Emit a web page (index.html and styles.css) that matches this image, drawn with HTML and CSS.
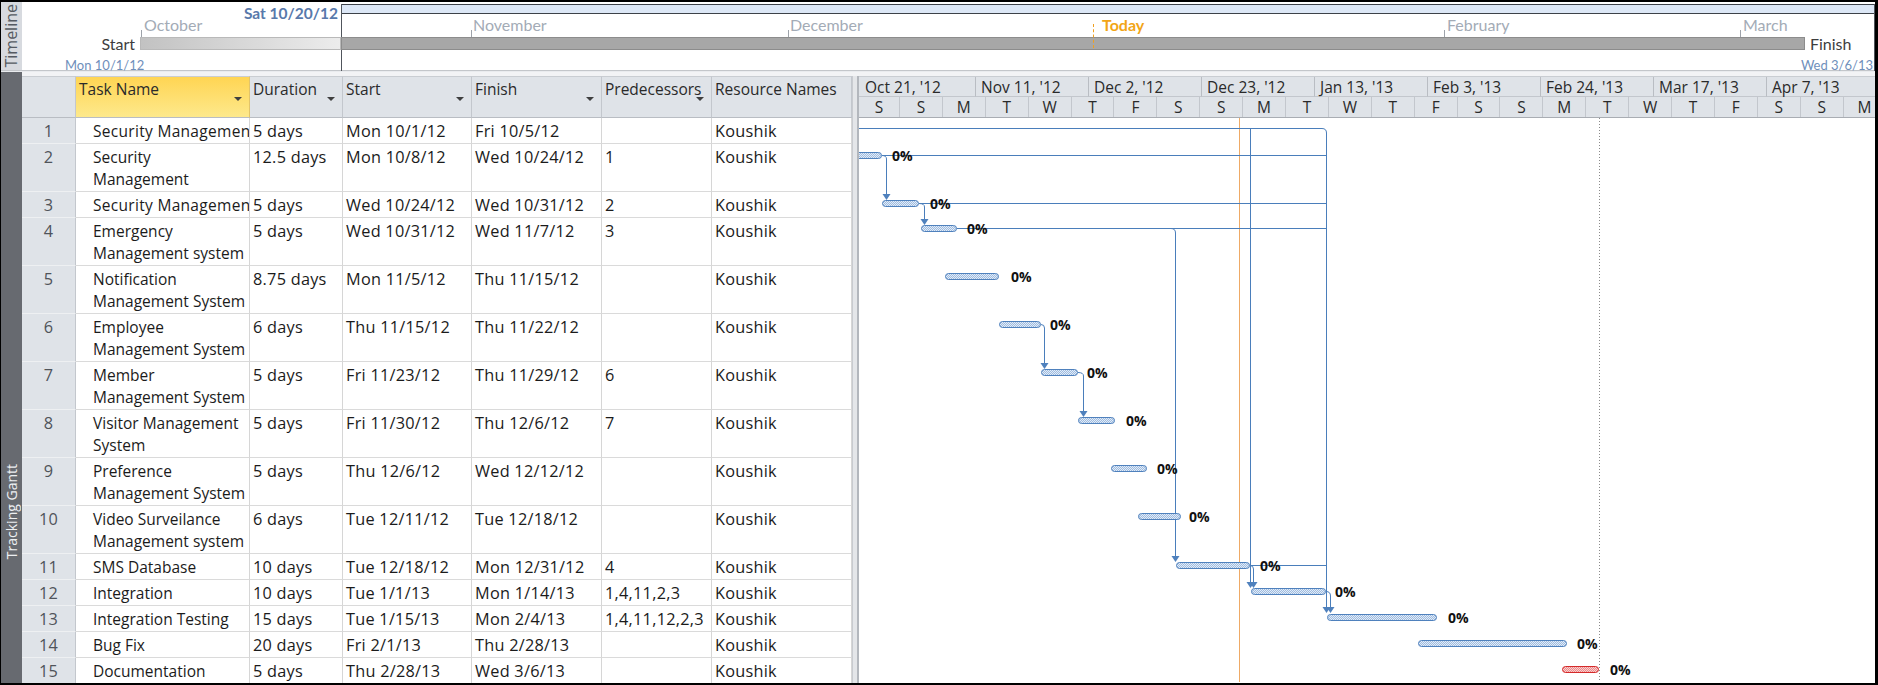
FILE: index.html
```html
<!DOCTYPE html>
<html lang="en">
<head>
<meta charset="utf-8">
<title>Tracking Gantt</title>
<link rel="stylesheet" href="styles.css">
</head>
<body>
<div class="frame">
  <section class="timeline">
    <div class="side side-light"><span>Timeline</span></div>
    <div class="tl-canvas">
      <div class="viewbox"><div class="band"></div></div>
      <div class="tl-sat">Sat 10/20/12</div>
      <div class="tick t-oct"></div><div class="month m-oct">October</div>
      <div class="tick t-nov"></div><div class="month m-nov">November</div>
      <div class="tick t-dec"></div><div class="month m-dec">December</div>
      <div class="tick t-feb"></div><div class="month m-feb">February</div>
      <div class="tick t-mar"></div><div class="month m-mar">March</div>
      <div class="today-tick"></div><div class="today">Today</div>
      <div class="tl-bar-past"></div>
      <div class="tl-bar"></div>
      <div class="tl-start">Start</div>
      <div class="tl-finish">Finish</div>
      <div class="tl-date d-start">Mon 10/1/12</div>
      <div class="tl-date d-end">Wed 3/6/13</div>
    </div>
  </section>
  <section class="main">
    <div class="side side-dark"><span>Tracking Gantt</span></div>
    <div class="work">
      <div class="topgap"></div>
      <div class="content">
        <table class="sheet">
          <colgroup>
            <col class="c-id"><col class="c-name"><col class="c-dur"><col class="c-start"><col class="c-fin"><col class="c-pred"><col class="c-res">
          </colgroup>
          <thead>
            <tr>
              <th class="id"></th>
              <th class="sel"><div class="hd"><span>Task Name</span><i class="dd"></i></div></th>
              <th><div class="hd"><span>Duration</span><i class="dd"></i></div></th>
              <th><div class="hd"><span>Start</span><i class="dd"></i></div></th>
              <th><div class="hd"><span>Finish</span><i class="dd"></i></div></th>
              <th><div class="hd"><span>Predecessors</span><i class="dd"></i></div></th>
              <th><div class="hd"><span>Resource Names</span></div></th>
            </tr>
          </thead>
          <tbody>
            <tr class="one"><td class="id">1</td><td class="name clip">Security Management</td><td>5 days</td><td>Mon 10/1/12</td><td>Fri 10/5/12</td><td></td><td>Koushik</td></tr>
            <tr class="two"><td class="id">2</td><td class="name">Security Management</td><td>12.5 days</td><td>Mon 10/8/12</td><td>Wed 10/24/12</td><td>1</td><td>Koushik</td></tr>
            <tr class="one"><td class="id">3</td><td class="name clip">Security Management</td><td>5 days</td><td>Wed 10/24/12</td><td>Wed 10/31/12</td><td>2</td><td>Koushik</td></tr>
            <tr class="two"><td class="id">4</td><td class="name">Emergency Management system</td><td>5 days</td><td>Wed 10/31/12</td><td>Wed 11/7/12</td><td>3</td><td>Koushik</td></tr>
            <tr class="two"><td class="id">5</td><td class="name">Notification Management System</td><td>8.75 days</td><td>Mon 11/5/12</td><td>Thu 11/15/12</td><td></td><td>Koushik</td></tr>
            <tr class="two"><td class="id">6</td><td class="name">Employee Management System</td><td>6 days</td><td>Thu 11/15/12</td><td>Thu 11/22/12</td><td></td><td>Koushik</td></tr>
            <tr class="two"><td class="id">7</td><td class="name">Member Management System</td><td>5 days</td><td>Fri 11/23/12</td><td>Thu 11/29/12</td><td>6</td><td>Koushik</td></tr>
            <tr class="two"><td class="id">8</td><td class="name">Visitor Management System</td><td>5 days</td><td>Fri 11/30/12</td><td>Thu 12/6/12</td><td>7</td><td>Koushik</td></tr>
            <tr class="two"><td class="id">9</td><td class="name">Preference Management System</td><td>5 days</td><td>Thu 12/6/12</td><td>Wed 12/12/12</td><td></td><td>Koushik</td></tr>
            <tr class="two"><td class="id">10</td><td class="name">Video Surveilance Management system</td><td>6 days</td><td>Tue 12/11/12</td><td>Tue 12/18/12</td><td></td><td>Koushik</td></tr>
            <tr class="one"><td class="id">11</td><td class="name">SMS Database</td><td>10 days</td><td>Tue 12/18/12</td><td>Mon 12/31/12</td><td>4</td><td>Koushik</td></tr>
            <tr class="one"><td class="id">12</td><td class="name">Integration</td><td>10 days</td><td>Tue 1/1/13</td><td>Mon 1/14/13</td><td>1,4,11,2,3</td><td>Koushik</td></tr>
            <tr class="one"><td class="id">13</td><td class="name">Integration Testing</td><td>15 days</td><td>Tue 1/15/13</td><td>Mon 2/4/13</td><td>1,4,11,12,2,3</td><td>Koushik</td></tr>
            <tr class="one"><td class="id">14</td><td class="name">Bug Fix</td><td>20 days</td><td>Fri 2/1/13</td><td>Thu 2/28/13</td><td></td><td>Koushik</td></tr>
            <tr class="one"><td class="id">15</td><td class="name">Documentation</td><td>5 days</td><td>Thu 2/28/13</td><td>Wed 3/6/13</td><td></td><td>Koushik</td></tr>
          </tbody>
        </table>
        <div class="splitter"></div>
        <div class="chart">
          <div class="tier tier-top">
            <div class="wk first">Oct 21, '12</div>
            <div class="wk">Nov 11, '12</div>
            <div class="wk">Dec 2, '12</div>
            <div class="wk">Dec 23, '12</div>
            <div class="wk">Jan 13, '13</div>
            <div class="wk">Feb 3, '13</div>
            <div class="wk">Feb 24, '13</div>
            <div class="wk">Mar 17, '13</div>
            <div class="wk">Apr 7, '13</div>
          </div>
          <div class="tier tier-bottom">
            <div>S</div><div>S</div><div>M</div><div>T</div><div>W</div><div>T</div><div>F</div><div>S</div>
            <div>S</div><div>M</div><div>T</div><div>W</div><div>T</div><div>F</div><div>S</div><div>S</div>
            <div>M</div><div>T</div><div>W</div><div>T</div><div>F</div><div>S</div><div>S</div><div>M</div>
          </div>
          <svg class="bars" width="1016" height="564" viewBox="0 0 1016 564" xmlns="http://www.w3.org/2000/svg">
            <defs>
              <pattern id="hatch" width="2" height="2" patternUnits="userSpaceOnUse">
                <rect width="2" height="2" fill="#e3ecf7"/>
                <rect width="1" height="1" fill="#9dbbe0"/>
                <rect x="1" y="1" width="1" height="1" fill="#9dbbe0"/>
              </pattern>
              <pattern id="hatchRed" width="2" height="2" patternUnits="userSpaceOnUse">
                <rect width="2" height="2" fill="#f8d0d0"/>
                <rect width="1" height="1" fill="#ee8a8a"/>
                <rect x="1" y="1" width="1" height="1" fill="#ee8a8a"/>
              </pattern>
            </defs>
            <g transform="translate(-859 -119)">
              <line x1="1239.5" y1="119" x2="1239.5" y2="685" stroke="#eeaa66" stroke-width="1"/>
              <line x1="1599.5" y1="119" x2="1599.5" y2="685" stroke="#8a8a8a" stroke-width="1" stroke-dasharray="1 2"/>
              <g fill="none" stroke="#4a7ebb" stroke-width="1">
                <path d="M859 129.5 H1322 Q1326.5 129.5 1326.5 134 V608"/>
                <path d="M1250.5 129.5 V583"/>
                <path d="M882 156.5 H1326"/>
                <path d="M882 156.5 Q886.5 156.5 886.5 160 V195"/>
                <path d="M919 204.5 H1326"/>
                <path d="M919 204.5 Q924.5 204.5 924.5 208 V220"/>
                <path d="M957 229.5 H1326"/>
                <path d="M957 229.5 H1171 Q1175.5 229.5 1175.5 234 V557"/>
                <path d="M1041 325.5 Q1044.5 325.5 1044.5 329 V364"/>
                <path d="M1078 373.5 Q1083.5 373.5 1083.5 377 V412"/>
                <path d="M1250 566.5 H1326"/>
                <path d="M1250 566.5 Q1253.5 566.5 1253.5 570 V583"/>
                <path d="M1326 592.5 Q1330.5 592.5 1330.5 597 V608"/>
              </g>
              <g fill="#4f81bd">
                <polygon points="1322.5,608 1330.5,608 1326.5,614"/>
                <polygon points="1246.5,583 1254.5,583 1250.5,589"/>
                <polygon points="882.5,195 890.5,195 886.5,201"/>
                <polygon points="920.5,220 928.5,220 924.5,226"/>
                <polygon points="1171.5,557 1179.5,557 1175.5,563"/>
                <polygon points="1040.5,364 1048.5,364 1044.5,370"/>
                <polygon points="1079.5,412 1087.5,412 1083.5,418"/>
                <polygon points="1249.5,583 1257.5,583 1253.5,589"/>
                <polygon points="1326.5,608 1334.5,608 1330.5,614"/>
              </g>
              <g fill="url(#hatch)" stroke="#4f81bd" stroke-width="1">
                <rect x="850.5" y="153.5" width="31" height="6" rx="3"/>
                <rect x="882.5" y="201.5" width="36" height="6" rx="3"/>
                <rect x="921.5" y="226.5" width="35" height="6" rx="3"/>
                <rect x="945.5" y="274.5" width="53" height="6" rx="3"/>
                <rect x="999.5" y="322.5" width="41" height="6" rx="3"/>
                <rect x="1041.5" y="370.5" width="36" height="6" rx="3"/>
                <rect x="1078.5" y="418.5" width="36" height="6" rx="3"/>
                <rect x="1111.5" y="466.5" width="35" height="6" rx="3"/>
                <rect x="1138.5" y="514.5" width="42" height="6" rx="3"/>
                <rect x="1176.5" y="563.5" width="73" height="6" rx="3"/>
                <rect x="1251.5" y="589.5" width="74" height="6" rx="3"/>
                <rect x="1327.5" y="615.5" width="109" height="6" rx="3"/>
                <rect x="1418.5" y="641.5" width="148" height="6" rx="3"/>
              </g>
              <rect x="1562.5" y="667.5" width="36" height="6" rx="3" fill="url(#hatchRed)" stroke="#d42a2a" stroke-width="1"/>
              <g class="pct">
                <text x="892" y="156">0%</text>
                <text x="930" y="204">0%</text>
                <text x="967" y="229">0%</text>
                <text x="1011" y="277">0%</text>
                <text x="1050" y="325">0%</text>
                <text x="1087" y="373">0%</text>
                <text x="1126" y="421">0%</text>
                <text x="1157" y="469">0%</text>
                <text x="1189" y="517">0%</text>
                <text x="1260" y="566">0%</text>
                <text x="1335" y="592">0%</text>
                <text x="1448" y="618">0%</text>
                <text x="1577" y="644">0%</text>
                <text x="1610" y="670">0%</text>
              </g>
            </g>
          </svg>
        </div>
      </div>
    </div>
  </section>
</div>
</body>
</html>
```

FILE: styles.css
```css
* { box-sizing: border-box; margin: 0; padding: 0; }
html, body { width: 1878px; height: 685px; overflow: hidden; }
body { background: #000; font-family: "Open Sans", "Noto Sans", sans-serif; color: #1b1b1b; }

.frame {
  margin: 2px 3px 2px 1px;
  width: 1874px;
  height: 681px;
  background: #fff;
  display: flex;
  flex-direction: column;
  overflow: hidden;
}

/* ---------- side labels ---------- */
.side {
  width: 21px;
  flex: 0 0 21px;
  display: flex;
  align-items: center;
}
.side span {
  writing-mode: vertical-rl;
  transform: rotate(180deg);
  white-space: nowrap;
  line-height: 21px;
}
.side-light { background: #d7dadf; justify-content: center; }
.side-light span { color: #555a61; font-size: 16px; }
.side-dark {
  background: #676a70;
  flex-direction: column;
  justify-content: flex-end;
  padding-bottom: 124px;
}
.side-dark span { color: #eceef1; font-size: 14px; }

/* ---------- timeline ---------- */
.timeline {
  height: 69px;
  flex: 0 0 69px;
  display: flex;
  border-bottom: 1px solid #c3c6ca;
}
.tl-canvas {
  position: relative;
  flex: 1;
  font-family: Lato, "Open Sans", sans-serif;
}
.viewbox {
  position: absolute;
  left: 319px; top: 2px; right: 0; bottom: -1px;
  border-left: 1px solid #50555c;
  border-right: 1px solid #50555c;
}
.band {
  height: 10px;
  background: #dce7f6;
  border-top: 1px solid #3c4148;
  border-bottom: 1px solid #3c4148;
}
.tl-sat {
  position: absolute;
  left: 180px; width: 136px; top: 1px;
  text-align: right;
  font-size: 15.5px; line-height: 20px; font-weight: 700;
  color: #5879ab;
}
.tick {
  position: absolute;
  top: 28px; width: 1px; height: 8px;
  background: #9ea3aa;
}
.month {
  position: absolute;
  top: 13px;
  font-size: 16px; line-height: 20px;
  color: #a3abb6;
}
.t-oct { left: 119px; } .m-oct { left: 122px; }
.t-nov { left: 449px; } .m-nov { left: 451px; }
.t-dec { left: 766px; } .m-dec { left: 768px; }
.t-feb { left: 1422px; } .m-feb { left: 1425px; }
.t-mar { left: 1718px; } .m-mar { left: 1721px; }
.today {
  position: absolute;
  left: 1080px; top: 13px;
  font-size: 16px; line-height: 20px; font-weight: 700;
  color: #f2a516;
}
.today-tick {
  position: absolute;
  left: 1071px; top: 22px; height: 24px; width: 0;
  border-left: 1px dashed #f0a020;
  z-index: 2;
}
.tl-bar-past {
  position: absolute;
  left: 118px; width: 201px; top: 35px; height: 13px;
  background: linear-gradient(to right, #c2c2c2, #ececec);
  border: 1px solid #b9b9b9;
}
.tl-bar {
  position: absolute;
  left: 319px; width: 1464px; top: 35px; height: 13px;
  background: #a7a7a7;
  border: 1px solid #8c8c8c;
}
.tl-start {
  position: absolute;
  left: 40px; width: 73px; top: 32px;
  text-align: right;
  font-size: 16px; line-height: 20px; color: #3d3d3d;
}
.tl-finish {
  position: absolute;
  left: 1788px; top: 32px;
  font-size: 16px; line-height: 20px; color: #3d3d3d;
}
.tl-date {
  position: absolute;
  top: 55px;
  font-size: 13px; line-height: 16px; color: #6f8fbb;
}
.d-start { left: 43px; }
.d-end { left: 1766px; width: 85px; text-align: right; }

/* ---------- main ---------- */
.main {
  flex: 1;
  display: flex;
  min-height: 0;
  border-top: 1px solid #e9ebee;
}
.work {
  flex: 1;
  display: flex;
  flex-direction: column;
  min-width: 0;
}
.topgap {
  height: 4px;
  flex: 0 0 4px;
  background: #f2f3f5;
}
.content {
  flex: 1;
  display: flex;
  min-height: 0;
  overflow: hidden;
  align-items: flex-start;
}

/* ---------- sheet ---------- */
.sheet {
  width: 830px;
  flex: 0 0 830px;
  table-layout: fixed;
  border-collapse: separate;
  border-spacing: 0;
  font-size: 15.5px;
}
.c-id { width: 54px; }
.c-name { width: 174px; }
.c-dur { width: 93px; }
.c-start { width: 129px; }
.c-fin { width: 130px; }
.c-pred { width: 110px; }
.c-res { width: 140px; }

.sheet th {
  height: 42px;
  background: #dfe3e8;
  border-right: 1px solid #c3c7cd;
  border-bottom: 1px solid #b9bdc3;
  border-top: 1px solid #c9cdd2;
  font-weight: 400;
  text-align: left;
  vertical-align: top;
  padding: 1px 7px 0 3px;
  color: #2a2a2a;
  white-space: nowrap;
}
.sheet th.sel {
  background: linear-gradient(to bottom, #ffd553, #fde98c);
  border-right-color: #e2c46a;
}
.hd {
  display: flex;
  align-items: flex-start;
  line-height: 22px;
}
.hd span { flex: 1 1 auto; min-width: 0; white-space: nowrap; }
.dd {
  flex: 0 0 8px;
  margin-top: 19px;
  width: 0; height: 0;
  border-left: 4px solid transparent;
  border-right: 4px solid transparent;
  border-top: 4px solid #3f3f3f;
}
.sheet td {
  vertical-align: top;
  padding: 2px 3px 0 3px;
  line-height: 22px;
  font-size: 16.3px;
  letter-spacing: 0.25px;
  border-right: 1px solid #d6d6d6;
  border-bottom: 1px solid #dadada;
  overflow: hidden;
  white-space: nowrap;
}
.sheet .one td { height: 26px; }
.sheet .two td { height: 48px; }
.sheet td.name {
  padding-left: 17px; padding-right: 0;
  white-space: normal;
  font-size: 15.5px;
  letter-spacing: 0;
}
.sheet td.name.clip { white-space: nowrap; letter-spacing: 0.3px; }
.sheet .id {
  background: #dfe3e8;
  text-align: center;
  color: #50545a;
  border-right: 1px solid #c3c7cd;
  border-bottom-color: #eef0f2;
  padding-left: 0; padding-right: 0;
}
.sheet th.id { border-bottom-color: #b9bdc3; }

/* ---------- splitter ---------- */
.splitter {
  flex: 0 0 7px;
  align-self: stretch;
  background: #e4e6e9;
  border-left: 1px solid #c8cbd0;
  border-right: 2px solid #b3b7bd;
}

/* ---------- chart ---------- */
.chart {
  flex: 1;
  min-width: 0;
  overflow: hidden;
  align-self: stretch;
  font-size: 15.5px;
  color: #2a2a2a;
}
.tier {
  height: 21px;
  background: #dfe3e8;
  display: flex;
  line-height: 20px;
  white-space: nowrap;
}
.tier-top { border-top: 1px solid #c9cdd2; }
.tier-top .wk {
  flex: 0 0 113px;
  padding-left: 5px;
  border-right: 1px solid #b9bdc3;
  border-bottom: 1px solid #c3c7cd;
}
.tier-top .wk.first { flex-basis: 117px; padding-left: 6px; }
.tier-bottom {
  display: grid;
  grid-template-columns: 41px repeat(23, 42.9px);
  border-bottom: 1px solid #a9adb3;
}
.tier-bottom div {
  text-align: center;
  border-right: 1px solid #c3c7cd;
}
.bars { display: block; }
.pct text {
  font-family: "Open Sans", sans-serif;
  font-weight: 700;
  font-size: 14px;
  fill: #111;
  dominant-baseline: central;
}
```
